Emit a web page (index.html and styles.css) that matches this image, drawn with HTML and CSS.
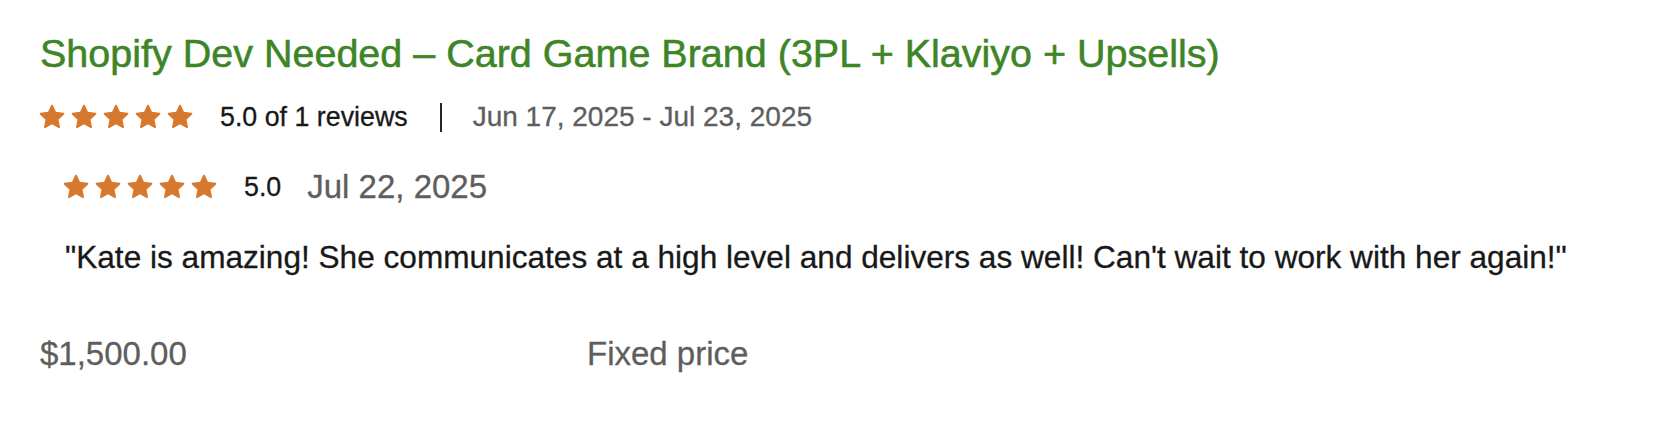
FILE: index.html
```html
<!DOCTYPE html>
<html lang="en">
<head>
<meta charset="utf-8">
<title>Work history</title>
<link rel="stylesheet" href="styles.css">
</head>
<body>
<svg class="defs" width="0" height="0" aria-hidden="true">
  <symbol id="star" viewBox="0 0 24 24">
    <path d="M12 2.2l2.95 6.2 6.8.85-5.02 4.68 1.32 6.75L12 17.35l-6.05 3.33 1.32-6.75L2.25 9.25l6.8-.85z" fill="currentColor" stroke="currentColor" stroke-width="1.6" stroke-linejoin="round"/>
  </symbol>
</svg>
<main class="job">
  <h2 class="job-title">Shopify Dev Needed – Card Game Brand (3PL + Klaviyo + Upsells)</h2>
  <div class="job-meta">
    <span class="stars">
      <svg class="star"><use href="#star"/></svg>
      <svg class="star"><use href="#star"/></svg>
      <svg class="star"><use href="#star"/></svg>
      <svg class="star"><use href="#star"/></svg>
      <svg class="star"><use href="#star"/></svg>
    </span>
    <span class="rating-text">5.0 of 1 reviews</span>
    <span class="divider"></span>
    <span class="date-range">Jun 17, 2025 - Jul 23, 2025</span>
  </div>
  <div class="feedback">
    <div class="feedback-head">
      <span class="stars">
        <svg class="star"><use href="#star"/></svg>
        <svg class="star"><use href="#star"/></svg>
        <svg class="star"><use href="#star"/></svg>
        <svg class="star"><use href="#star"/></svg>
        <svg class="star"><use href="#star"/></svg>
      </span>
      <span class="score">5.0</span>
      <span class="feedback-date">Jul 22, 2025</span>
    </div>
    <p class="quote">"Kate is amazing! She communicates at a high level and delivers as well! Can't wait to work with her again!"</p>
  </div>
  <div class="job-footer">
    <span class="price">$1,500.00</span>
    <span class="price-type">Fixed price</span>
  </div>
</main>
</body>
</html>
```

FILE: styles.css
```css
html, body {
  margin: 0;
  padding: 0;
  background: #ffffff;
}

body {
  font-family: "Liberation Sans", Arial, sans-serif;
  color: #181818;
  -webkit-text-stroke: 0.3px currentColor;
}

.defs {
  position: absolute;
  width: 0;
  height: 0;
  overflow: hidden;
}

.job {
  padding: 29px 40px 0 40px;
}

.job-title {
  margin: 0;
  font-size: 39.5px;
  line-height: 48px;
  font-weight: 400;
  color: #3d8527;
  -webkit-text-stroke: 0.55px currentColor;
}

.job-meta {
  display: flex;
  align-items: center;
  margin-top: 24px;
  height: 32px;
}

.stars {
  display: flex;
  align-items: center;
  gap: 4px;
  margin-left: -2px;
  color: #d6792e;
}

.star {
  width: 28px;
  height: 28px;
  display: block;
}

.rating-text {
  margin-left: 26px;
  font-size: 26.8px;
  line-height: 32px;
  color: #181818;
}

.divider {
  width: 2px;
  height: 29px;
  background: #262626;
  margin: 0 31px 0 32px;
}

.date-range {
  font-size: 28px;
  line-height: 32px;
  color: #5e5e5e;
}

.feedback {
  padding-left: 24px;
}

.feedback-head {
  display: flex;
  align-items: center;
  margin-top: 34px;
  height: 40px;
}

.score {
  margin-left: 26px;
  font-size: 26.8px;
  line-height: 40px;
  color: #181818;
}

.feedback-date {
  margin-left: 26px;
  font-size: 33px;
  line-height: 40px;
  color: #5e5e5e;
}

.quote {
  margin: 31px 0 0 1px;
  font-size: 31.6px;
  line-height: 38px;
  color: #181818;
}

.job-footer {
  display: flex;
  margin-top: 58px;
  font-size: 33px;
  line-height: 40px;
  color: #5e5e5e;
}

.price {
  width: 547px;
}
```
